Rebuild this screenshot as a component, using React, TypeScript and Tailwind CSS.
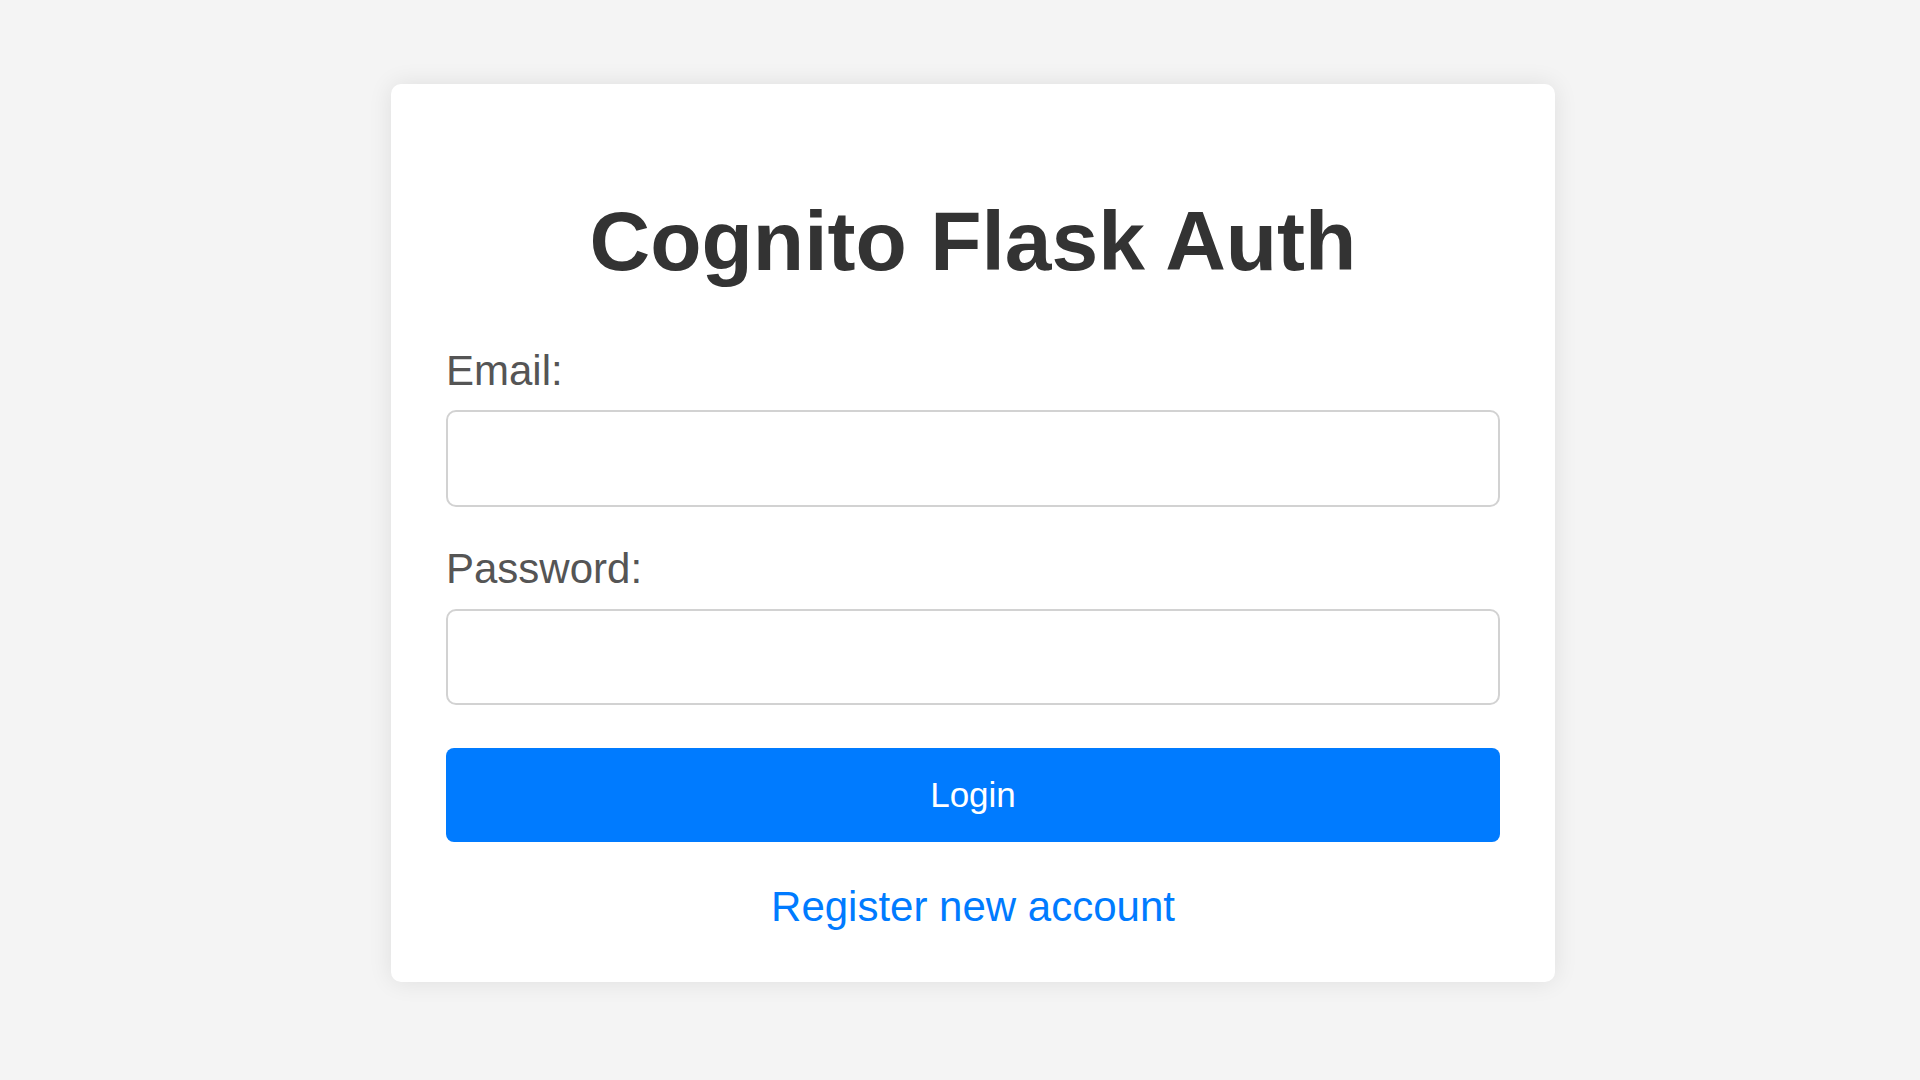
import { useState } from 'react';

export default function App() {
  const [email, setEmail] = useState('');
  const [password, setPassword] = useState('');

  return (
    <div className="min-h-screen w-full bg-[#f4f4f4] flex justify-center pl-[26px] pt-[84px] font-['Liberation_Sans',Arial,sans-serif]">
      <div className="w-[1164px] h-[898px] bg-white rounded-[10px] shadow-[0_0_24px_rgba(0,0,0,0.09)] px-[55px] pt-[109px]">
        <h1 className="text-center text-[84px] leading-[96px] font-bold text-[#333]">Cognito Flask Auth</h1>

        <form onSubmit={(e) => e.preventDefault()} className="mt-[58px] flex flex-col">
          <label className="block text-[42px] leading-[48px] text-[#555]">Email:</label>
          <input
            type="email"
            value={email}
            onChange={(e) => setEmail(e.target.value)}
            className="mt-[15px] w-full h-[97px] border-2 border-[#d2d2d2] rounded-[10px] px-5 text-[42px] outline-none"
          />

          <label className="mt-[38px] block text-[42px] leading-[48px] text-[#555]">Password:</label>
          <input
            type="password"
            value={password}
            onChange={(e) => setPassword(e.target.value)}
            className="mt-[16px] w-full h-[96px] border-2 border-[#d2d2d2] rounded-[10px] px-5 text-[42px] outline-none"
          />

          <button
            type="submit"
            className="mt-[43px] w-full h-[94px] bg-[#007bff] text-white text-[35px] rounded-[8px]"
          >
            Login
          </button>
        </form>

        <div className="mt-[41px] text-center text-[42px] leading-[48px]">
          <a href="#" className="text-[#007bff]">Register new account</a>
        </div>
      </div>
    </div>
  );
}
